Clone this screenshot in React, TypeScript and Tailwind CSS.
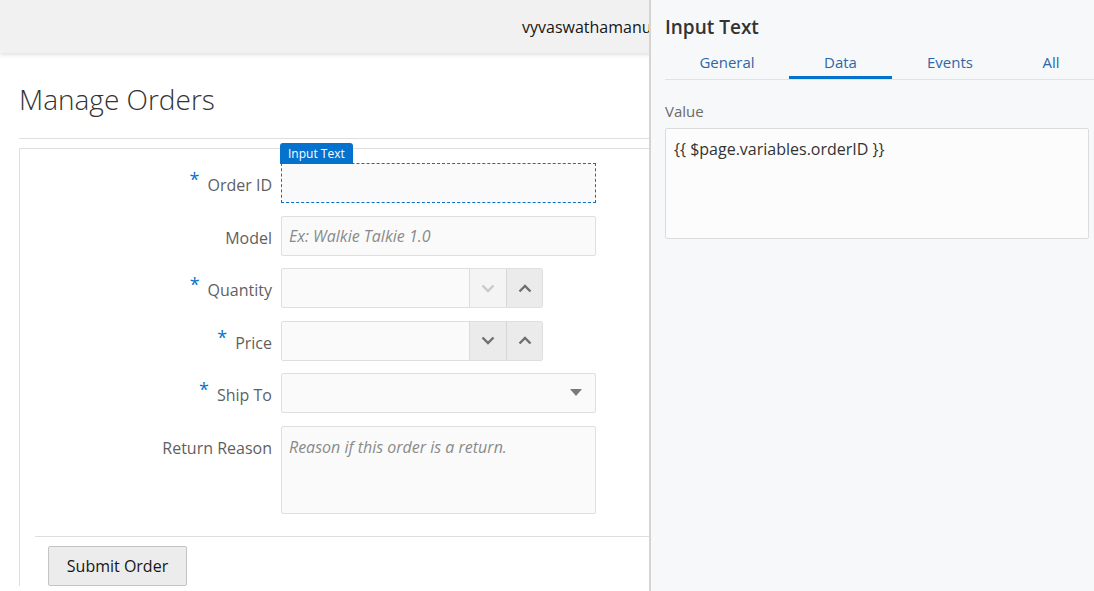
import React from "react";

const font = { fontFamily: '"Open Sans", "Noto Sans", Arial, sans-serif' };

function Chevron({ up, light }: { up?: boolean; light?: boolean }) {
  return (
    <svg width="14" height="9" viewBox="0 0 14 9" fill="none">
      <polyline
        points={up ? "1.5,7.5 7,2 12.5,7.5" : "1.5,1.5 7,7 12.5,1.5"}
        stroke={light ? "#c9c9c9" : "#6f6f6f"}
        strokeWidth="2.4"
      />
    </svg>
  );
}

function Label({ text, required }: { text: string; required?: boolean }) {
  return (
    <div className="h-[40px] w-[261px] shrink-0 pr-[9px] text-right text-[16px] leading-[44px] whitespace-nowrap text-[#5f5f5f]">
      {required ? (
        <span className="relative -top-[5px] mr-[8px] text-[18px] leading-[0] text-[#0572ce]">*</span>
      ) : null}
      {text}
    </div>
  );
}

function NumberField({ downDisabled }: { downDisabled?: boolean }) {
  return (
    <div className="flex h-[40px] w-[262px] overflow-hidden rounded-[2px] border border-[#dfdfdf] bg-[#fafafa]">
      <div className="flex-1" />
      <div
        className={`flex w-[37px] items-center justify-center border-l border-[#dcdcdc] ${
          downDisabled ? "bg-[#f4f4f4]" : "bg-[#ebebeb]"
        }`}
      >
        <Chevron light={downDisabled} />
      </div>
      <div className="flex w-[36px] items-center justify-center border-l border-[#d6d6d6] bg-[#ebebeb]">
        <Chevron up />
      </div>
    </div>
  );
}

export default function App() {
  return (
    <div className="flex h-[591px] w-[1094px] overflow-hidden bg-white" style={font}>
      {/* page under design */}
      <div className="w-[649px] shrink-0 overflow-hidden">
        <div className="flex h-[53px] w-[800px] items-center bg-[#f1f1f1] pl-[522px] text-[16px] whitespace-nowrap text-[#161616] shadow-[0_2px_4px_rgba(0,0,0,0.12)]">
          vyvaswathamanu@oracle.com
        </div>
        <div className="pl-[19px]">
          <h1 className="mt-[29px] text-[28px] leading-[34px] font-light text-[#333]">Manage Orders</h1>
          <div className="mt-[22px] h-px w-[640px] bg-[#dedede]" />
          <div className="mt-[9px] w-[700px] border-t border-l border-[#dfdfdf] pt-[14px]">
            <div className="flex flex-col gap-[12.6px]">
              <div className="flex">
                <Label text="Order ID" required />
                <div className="relative">
                  <div className="absolute -top-[20px] -left-px rounded-t-[3px] bg-[#0572ce] px-[8px] text-[12px] leading-[21px] text-white">
                    Input Text
                  </div>
                  <div className="h-[40px] w-[315px] border border-dashed border-[#0572ce] bg-[#fafafa]" />
                </div>
              </div>
              <div className="flex">
                <Label text="Model" />
                <div className="flex h-[40px] w-[315px] items-center rounded-[2px] border border-[#dfdfdf] bg-[#fafafa] px-[7px] text-[16px] text-[#8a8a8a] italic">
                  Ex: Walkie Talkie 1.0
                </div>
              </div>
              <div className="flex">
                <Label text="Quantity" required />
                <NumberField downDisabled />
              </div>
              <div className="flex">
                <Label text="Price" required />
                <NumberField />
              </div>
              <div className="flex">
                <Label text="Ship To" required />
                <div className="flex h-[40px] w-[315px] items-center justify-end rounded-[2px] border border-[#dfdfdf] bg-[#fafafa] pr-[13px]">
                  <svg width="12" height="8" viewBox="0 0 12 8">
                    <polygon points="0,0 12,0 6,7" fill="#7a7a7a" />
                  </svg>
                </div>
              </div>
              <div className="flex">
                <Label text="Return Reason" />
                <div className="h-[88px] w-[315px] rounded-[2px] border border-[#dfdfdf] bg-[#fafafa] px-[7px] pt-[8px] text-[16px] leading-[24px] text-[#8a8a8a] italic">
                  Reason if this order is a return.
                </div>
              </div>
            </div>
            <div className="mt-[22px] ml-[15px] h-px bg-[#dfdfdf]" />
            <div className="pt-[9px] pl-[28px]">
              <button
                type="button"
                className="h-[40px] w-[139px] rounded-[2px] border border-[#c4c4c4] bg-[#ececec] text-[16px] text-[#161616]"
              >
                Submit Order
              </button>
            </div>
          </div>
        </div>
      </div>

      {/* property inspector */}
      <div className="flex-1 border-l-2 border-[#d4d4d4] bg-[#f7f8fa] pl-[14px]">
        <div className="pt-[14px] text-[19px] leading-[26px] font-semibold text-[#333]">Input Text</div>
        <div className="mt-[12px] flex border-b border-[#dfe3e8] text-[15px] text-[#2f67a6]">
          <div className="w-[124px] pb-[7px] text-center leading-[20px]">General</div>
          <div className="w-[103px] border-b-[3px] border-[#0572ce] pb-[4px] text-center leading-[20px]">Data</div>
          <div className="w-[116px] pb-[7px] text-center leading-[20px]">Events</div>
          <div className="w-[86px] pb-[7px] text-center leading-[20px]">All</div>
        </div>
        <div className="mt-[21px] text-[15px] leading-[20px] text-[#6b6b6b]">Value</div>
        <div className="mt-[7px] mr-[5px] h-[111px] rounded-[2px] border border-[#dcdcdc] bg-[#fcfcfc] px-[8px] pt-[9px] text-[16px] leading-[22px] text-[#333]">
          {"{{ $page.variables.orderID }}"}
        </div>
      </div>
    </div>
  );
}
